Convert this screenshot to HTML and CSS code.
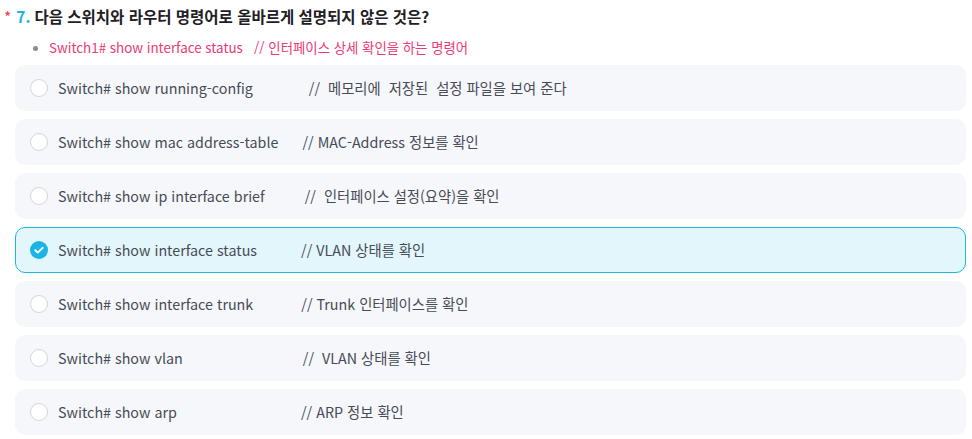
FILE: index.html
```html
<!DOCTYPE html>
<html lang="ko">
<head>
<meta charset="utf-8">
<link rel="stylesheet" href="styles.css">
</head>
<body>
<div class="question">
  <h2 class="q-title"><span class="req">*</span><span class="num">7.</span>다음 스위치와 라우터 명령어로 올바르게 설명되지 않은 것은?</h2>
  <ul class="hint">
    <li>Switch1# show interface status   // 인터페이스 상세 확인을 하는 명령어</li>
  </ul>
  <div class="options">
    <label class="opt"><span class="radio"></span><span class="txt">Switch# show running-config              //  메모리에  저장된  설정 파일을 보여 준다</span></label>
    <label class="opt"><span class="radio"></span><span class="txt">Switch# show mac address-table      // MAC-Address 정보를 확인</span></label>
    <label class="opt"><span class="radio"></span><span class="txt">Switch# show ip interface brief          //  인터페이스 설정(요약)을 확인</span></label>
    <label class="opt selected"><span class="radio checked"><svg viewBox="0 0 18 18" width="18" height="18"><path d="M5.3 9.2l2.5 2.4 4.9-4.9" fill="none" stroke="#fff" stroke-width="2" stroke-linecap="round" stroke-linejoin="round"/></svg></span><span class="txt">Switch# show interface status           // VLAN 상태를 확인</span></label>
    <label class="opt"><span class="radio"></span><span class="txt">Switch# show interface trunk            // Trunk 인터페이스를 확인</span></label>
    <label class="opt"><span class="radio"></span><span class="txt">Switch# show vlan                              //  VLAN 상태를 확인</span></label>
    <label class="opt"><span class="radio"></span><span class="txt">Switch# show arp                               // ARP 정보 확인</span></label>
  </div>
</div>
</body>
</html>
```

FILE: styles.css
```css
html, body {
  margin: 0;
  padding: 0;
  background: #ffffff;
}
body {
  font-family: "Noto Sans CJK KR", "Noto Sans", sans-serif;
  color: #444a55;
}
.question {
  padding: 5px 6px 0 4px;
}
.q-title {
  margin: 0;
  font-size: 15.5px;
  line-height: 22px;
  font-weight: 700;
  color: #1e2025;
  display: flex;
  align-items: baseline;
}
.req {
  color: #f0384f;
  font-weight: 400;
  margin-right: 5px;
}
.num {
  color: #1fb3df;
  margin-right: 4px;
}
.hint {
  margin: 10px 0 8px 0;
  padding-left: 45px;
  font-size: 13.4px;
  line-height: 20px;
  color: #ea3a73;
}
.hint li {
  white-space: pre;
}
.hint li::marker {
  color: #888d96;
  font-size: 12px;
}
.options {
  display: flex;
  flex-direction: column;
  gap: 8px;
  margin-left: 11px;
}
.opt {
  display: flex;
  align-items: center;
  height: 46px;
  box-sizing: border-box;
  padding-left: 14px;
  background: #f6f7fb;
  border-radius: 10px;
  border: 1px solid transparent;
}
.opt.selected {
  background: #e3f6fb;
  border-color: #1fb6d9;
}
.radio {
  width: 18px;
  height: 18px;
  box-sizing: border-box;
  border-radius: 50%;
  border: 1px solid #d3d6dc;
  background: #ffffff;
  flex: none;
  margin-right: 10px;
  display: flex;
}
.radio.checked {
  border: none;
  background: #18b4e6;
}
.txt {
  font-size: 14.3px;
  line-height: 20px;
  white-space: pre;
  color: #464b55;
}
```
